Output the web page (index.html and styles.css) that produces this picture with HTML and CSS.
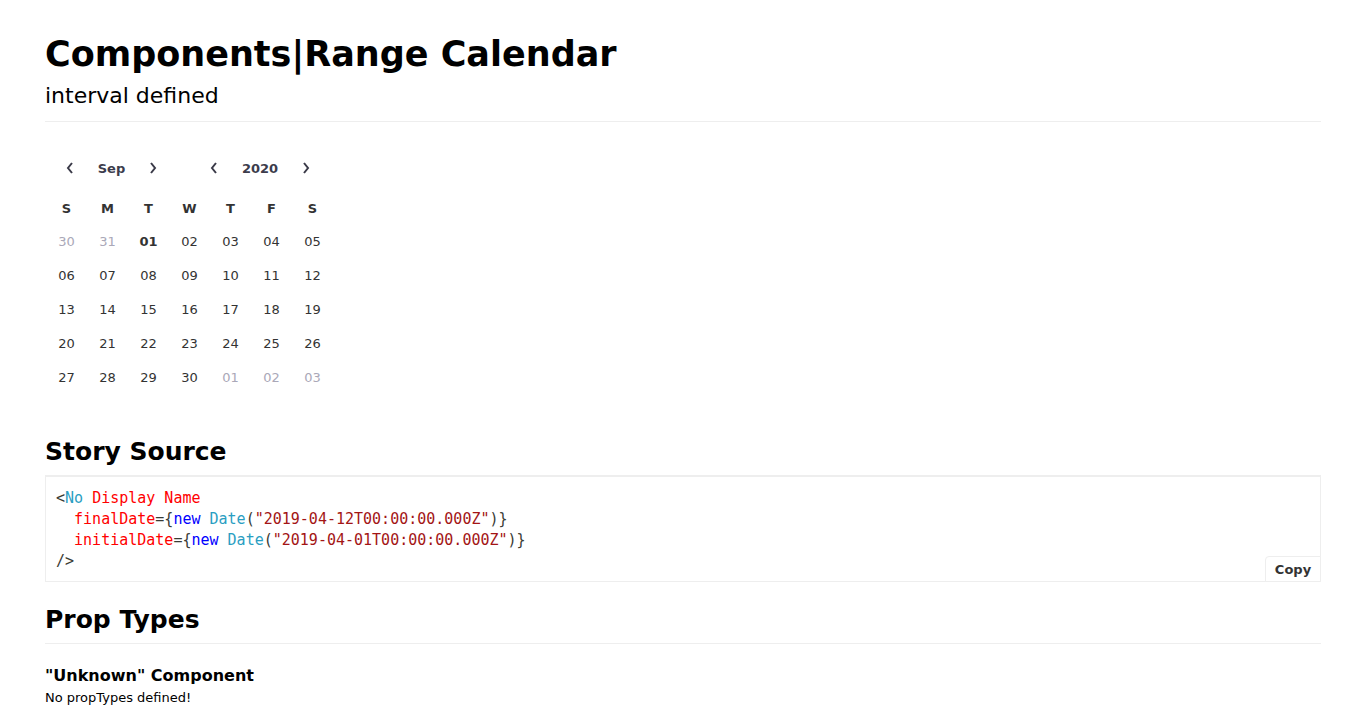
FILE: index.html
```html
<!DOCTYPE html>
<html>
<head>
<meta charset="utf-8">
<link rel="stylesheet" href="styles.css">
</head>
<body>
<div class="page">
  <header class="info-header">
    <h1 class="title">Components|Range Calendar</h1>
    <h2 class="subtitle">interval defined</h2>
  </header>

  <div class="story">
    <div class="calendar">
      <div class="cal-nav">
        <div class="nav-group month">
          <button class="nav-btn" aria-label="previous month"><svg width="8" height="12" viewBox="0 0 8 12"><path d="M6 1 L2 6 L6 11" fill="none" stroke="#3a3a48" stroke-width="2"/></svg></button>
          <span class="nav-label">Sep</span>
          <button class="nav-btn" aria-label="next month"><svg width="8" height="12" viewBox="0 0 8 12"><path d="M2 1 L6 6 L2 11" fill="none" stroke="#3a3a48" stroke-width="2"/></svg></button>
        </div>
        <div class="nav-group year">
          <button class="nav-btn" aria-label="previous year"><svg width="8" height="12" viewBox="0 0 8 12"><path d="M6 1 L2 6 L6 11" fill="none" stroke="#3a3a48" stroke-width="2"/></svg></button>
          <span class="nav-label">2020</span>
          <button class="nav-btn" aria-label="next year"><svg width="8" height="12" viewBox="0 0 8 12"><path d="M2 1 L6 6 L2 11" fill="none" stroke="#3a3a48" stroke-width="2"/></svg></button>
        </div>
      </div>
      <div class="cal-grid">
        <div class="wd">S</div><div class="wd">M</div><div class="wd">T</div><div class="wd">W</div><div class="wd">T</div><div class="wd">F</div><div class="wd">S</div>
        <div class="day out">30</div><div class="day out">31</div><div class="day today">01</div><div class="day">02</div><div class="day">03</div><div class="day">04</div><div class="day">05</div>
        <div class="day">06</div><div class="day">07</div><div class="day">08</div><div class="day">09</div><div class="day">10</div><div class="day">11</div><div class="day">12</div>
        <div class="day">13</div><div class="day">14</div><div class="day">15</div><div class="day">16</div><div class="day">17</div><div class="day">18</div><div class="day">19</div>
        <div class="day">20</div><div class="day">21</div><div class="day">22</div><div class="day">23</div><div class="day">24</div><div class="day">25</div><div class="day">26</div>
        <div class="day">27</div><div class="day">28</div><div class="day">29</div><div class="day">30</div><div class="day out">01</div><div class="day out">02</div><div class="day out">03</div>
      </div>
    </div>
  </div>

  <h1 class="section-title">Story Source</h1>
  <div class="source">
<pre class="code"><span class="p">&lt;</span><span class="tag">No</span> <span class="attr">Display Name</span>
  <span class="attr">finalDate</span><span class="p">={</span><span class="kw">new</span> <span class="tag">Date</span><span class="p">(</span><span class="str">"2019-04-12T00:00:00.000Z"</span><span class="p">)}</span>
  <span class="attr">initialDate</span><span class="p">={</span><span class="kw">new</span> <span class="tag">Date</span><span class="p">(</span><span class="str">"2019-04-01T00:00:00.000Z"</span><span class="p">)}</span>
<span class="p">/&gt;</span></pre>
    <button class="copy">Copy</button>
  </div>

  <h1 class="section-title props-title">Prop Types</h1>
  <div class="props">
    <h2 class="comp-name">"Unknown" Component</h2>
    <p class="no-props">No propTypes defined!</p>
  </div>
</div>
</body>
</html>
```

FILE: styles.css
```css
html, body {
  margin: 0;
  padding: 0;
  background: #fff;
}
body {
  font-family: "DejaVu Sans", sans-serif;
  color: #000;
}
.page {
  padding: 31px 45px 20px;
}
.info-header {
  border-bottom: 1px solid #eee;
  padding-bottom: 9px;
  margin-bottom: 28px;
}
.title {
  margin: 0;
  font-size: 35px;
  font-weight: bold;
  line-height: 46px;
}
.subtitle {
  margin: 3px 0 0;
  font-size: 22px;
  font-weight: normal;
  line-height: 32px;
}
.story {
  display: flex;
}
.calendar {
  width: 288px;
  color: #333;
  font-size: 13px;
}
.cal-nav {
  display: flex;
  height: 36px;
  align-items: center;
  padding-left: 21px;
  gap: 53px;
}
.nav-group {
  display: flex;
  align-items: center;
}
.nav-btn {
  border: 0;
  background: transparent;
  padding: 0;
  width: 8px;
  height: 12px;
  display: flex;
}
.nav-label {
  font-weight: bold;
  color: #3c3c4c;
  text-align: center;
}
.month .nav-label {
  width: 75px;
}
.year .nav-label {
  width: 84px;
}
.cal-grid {
  display: grid;
  grid-template-columns: repeat(7, 41px);
  grid-template-rows: 32px;
  grid-auto-rows: 34px;
  margin: 6px 0 0 1px;
}
.wd {
  display: flex;
  align-items: center;
  justify-content: center;
  font-weight: bold;
  color: #333;
}
.day {
  display: flex;
  align-items: center;
  justify-content: center;
  color: #333;
}
.day.out {
  color: #aaa8b8;
}
.day.today {
  font-weight: bold;
}
.section-title {
  margin: 43px 0 8px;
  font-size: 25px;
  font-weight: bold;
  line-height: 30px;
}
.source {
  position: relative;
  border: 1px solid #eee;
  border-top: 2px solid #eee;
}
.code {
  margin: 0;
  padding: 11px 10px 9px;
  font-family: "DejaVu Sans Mono", monospace;
  font-size: 15px;
  line-height: 21px;
  color: #333;
}
.code .tag { color: #2a9ec2; }
.code .attr { color: #ff0000; }
.code .kw { color: #0000ff; }
.code .str { color: #a31515; }
.code .p { color: #393a34; }
.copy {
  position: absolute;
  right: -1px;
  bottom: -1px;
  width: 56px;
  height: 26px;
  border: 1px solid #eee;
  border-radius: 4px 0 0 0;
  background: #fff;
  font-family: "DejaVu Sans", sans-serif;
  font-weight: bold;
  font-size: 13px;
  color: #333;
  padding: 0;
}
.props-title {
  margin-top: 23px;
  padding-bottom: 8px;
  border-bottom: 1px solid #eee;
  margin-bottom: 0;
}
.props {
  padding-top: 22px;
}
.comp-name {
  margin: 0;
  font-size: 16px;
  font-weight: bold;
  line-height: 20px;
}
.no-props {
  margin: 3px 0 0;
  font-size: 13px;
  line-height: 18px;
}
```
